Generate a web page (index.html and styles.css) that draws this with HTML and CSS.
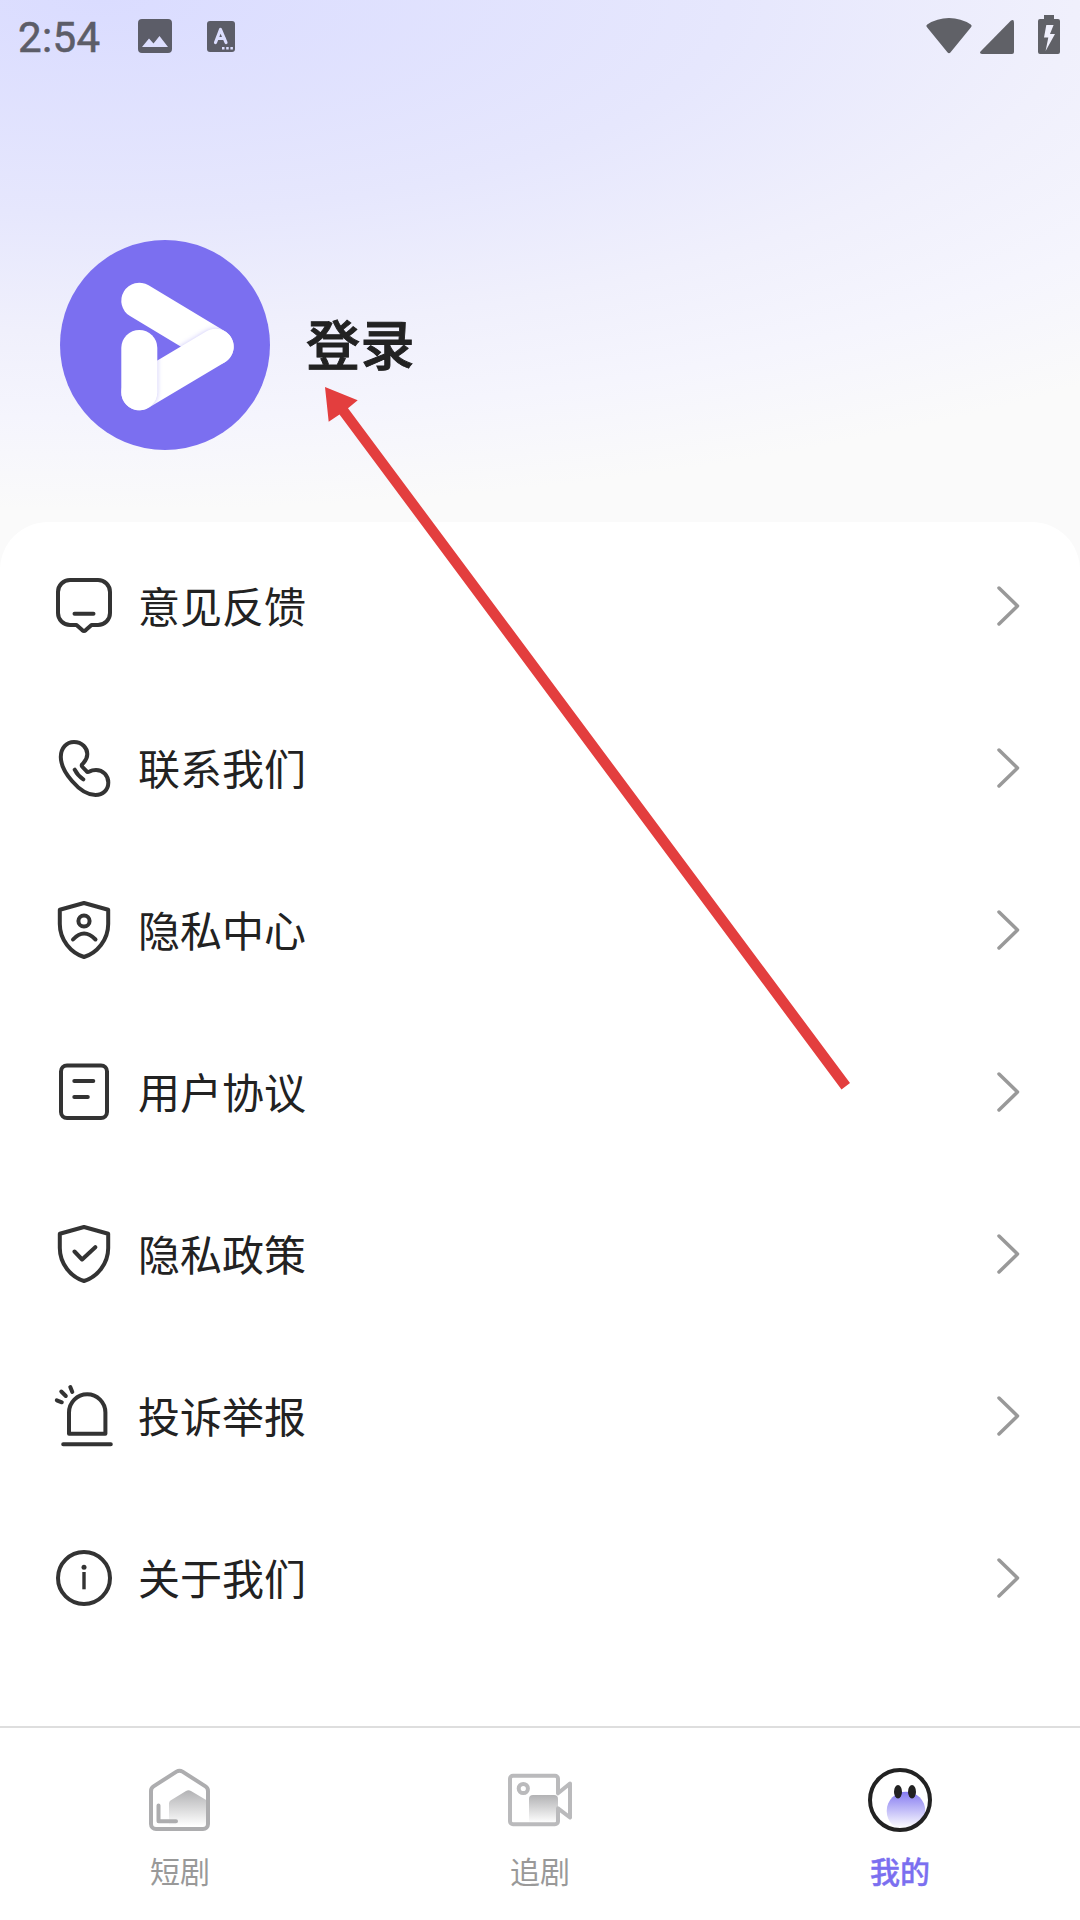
FILE: index.html
```
<!DOCTYPE html>
<html lang="zh-CN">
<head>
    <meta charset="UTF-8">
    <meta name="viewport" content="width=device-width, initial-scale=1.0">
    <title>我的</title>
    <link rel="stylesheet" href="styles.css">
</head>
<body>
    <div class="page">
        <header class="status-bar">
            <span class="time">2:54</span>
            <svg class="status-image" width="34" height="34" viewBox="0 0 34 34">
                <path fill-rule="evenodd" d="M4 0h26a4 4 0 0 1 4 4v26a4 4 0 0 1-4 4H4a4 4 0 0 1-4-4V4a4 4 0 0 1 4-4zM4 28h26l-8.500-11-6 7.500-4.500-5z"/>
            </svg>
            <svg class="status-input" width="28" height="31" viewBox="0 0 28 31">
                <rect width="28" height="31" rx="3"/>
                <path d="M8.500 21.500L13.500 8.500L19 21.500M10 17.500h7.500" fill="none" stroke="#dcdeff" stroke-width="3.200" stroke-linecap="round" stroke-linejoin="round"/>
                <path d="M15 26h2.500v2.500H15zM19.200 26h2.500v2.500h-2.500zM23.400 26h2.500v2.500h-2.500z" fill="#dcdeff"/>
            </svg>
            <div class="status-right">
                <svg width="46" height="37" viewBox="0 0 46 37">
                    <path d="M1.200 7.500Q11 1 23 1T44.800 7.500Q46.300 8.700 45 10.200L24.400 35.500Q23 37 21.600 35.500L1 10.200Q-.3 8.700 1.200 7.500z"/>
                </svg>
                <svg class="signal" width="34" height="34" viewBox="0 0 34 34">
                    <path d="M31 .6Q34-1 34 2.500V32a2 2 0 0 1-2 2H2Q-1 34 .5 31.400z"/>
                </svg>
                <svg class="battery" width="22" height="39" viewBox="0 0 22 39">
                    <path fill-rule="evenodd" d="M6 0h10v4h4a2 2 0 0 1 2 2v31a2 2 0 0 1-2 2H2a2 2 0 0 1-2-2V6a2 2 0 0 1 2-2h4zM8.300 10L6 22.500h4.300L7.600 36 17 19h-5l3.600-9z"/>
                </svg>
            </div>
        </header>

        <section class="profile">
            <svg class="avatar" width="210" height="210" viewBox="0 0 210 210">
                <defs>
                    <filter id="soft" filterUnits="userSpaceOnUse" x="0" y="0" width="210" height="210">
                        <feGaussianBlur stdDeviation="2.500"/>
                    </filter>
                    <mask id="topBar" maskUnits="userSpaceOnUse" x="0" y="0" width="210" height="210">
                        <path d="M79.300 60.700L155.700 106.700" stroke="#fff" stroke-width="36" stroke-linecap="round"/>
                    </mask>
                    <mask id="lowBar" maskUnits="userSpaceOnUse" x="0" y="0" width="210" height="210">
                        <path d="M155.700 106.700L79.300 152.300" stroke="#fff" stroke-width="36" stroke-linecap="round"/>
                    </mask>
                </defs>
                <circle cx="105" cy="105" r="105" fill="#7b6ff0"/>
                <g stroke-width="36" stroke-linecap="round">
                    <path d="M79.300 60.700L155.700 106.700" stroke="#fff"/>
                    <g mask="url(#topBar)">
                        <path d="M155.700 106.700L79.300 152.300" stroke="#7b6ff0" opacity=".4" filter="url(#soft)"/>
                    </g>
                    <path d="M155.700 106.700L79.300 152.300" stroke="#fff"/>
                    <g mask="url(#lowBar)">
                        <path d="M79.300 108V152.300" stroke="#7b6ff0" opacity=".4" filter="url(#soft)"/>
                    </g>
                    <path d="M79.300 108V152.300" stroke="#fff"/>
                </g>
            </svg>
            <h1>登录</h1>
        </section>

        <main class="menu">
            <a class="menu-item">
                <svg class="icon" viewBox="0 0 60 60">
                    <path d="M16 4h28a12 12 0 0 1 12 12v21a12 12 0 0 1-12 12h-6.500l-5.700 5.100q-1.800 1.500-3.600 0L22.500 49H16A12 12 0 0 1 4 37V16A12 12 0 0 1 16 4zM20.500 37.800h19"/>
                </svg>
                <span>意见反馈</span>
                <svg class="chevron" viewBox="0 0 24 42"><path d="M3 3l18.500 18L3 39"/></svg>
            </a>
            <a class="menu-item">
                <svg class="icon" viewBox="0 0 60 60">
                    <path d="M20 4C28 4 33.300 10 33.300 16C33.300 22 30 24 28 26.500Q27.300 27.700 28.500 29L32.500 33.200Q33.500 34.500 35.500 33.500C37.500 32.300 39 32 42 32C49 32 54.300 37.500 54.300 44.500C54.300 52 49 57 41.500 57C32 57 24 50 18 43C11 35 6.800 27 6.800 19C6.800 10 12.500 4 20 4zM20.700 31.700Q23.500 37.500 29.300 41.300"/>
                </svg>
                <span>联系我们</span>
                <svg class="chevron" viewBox="0 0 24 42"><path d="M3 3l18.500 18L3 39"/></svg>
            </a>
            <a class="menu-item">
                <svg class="icon" viewBox="0 0 60 60">
                    <path d="M30 3L54.200 9.700V24C54.200 40 43 53 30 57C17 53 5.800 40 5.800 24V9.700zM19 39.500Q30 27.500 41.500 39.500"/>
                    <circle cx="30" cy="21" r="5.600"/>
                </svg>
                <span>隐私中心</span>
                <svg class="chevron" viewBox="0 0 24 42"><path d="M3 3l18.500 18L3 39"/></svg>
            </a>
            <a class="menu-item">
                <svg class="icon" viewBox="0 0 60 60">
                    <rect x="7" y="3.500" width="46" height="52.500" rx="6"/>
                    <path d="M20.300 19h19M20.300 35h13.500"/>
                </svg>
                <span>用户协议</span>
                <svg class="chevron" viewBox="0 0 24 42"><path d="M3 3l18.500 18L3 39"/></svg>
            </a>
            <a class="menu-item">
                <svg class="icon" viewBox="0 0 60 60">
                    <path d="M30 3L54.200 9.700V24C54.200 40 43 53 30 57C17 53 5.800 40 5.800 24V9.700zM20.500 27.500l7.600 8L41.300 23.200"/>
                </svg>
                <span>隐私政策</span>
                <svg class="chevron" viewBox="0 0 24 42"><path d="M3 3l18.500 18L3 39"/></svg>
            </a>
            <a class="menu-item">
                <svg class="icon" viewBox="0 0 60 60">
                    <path d="M15 47.700V26.500a18.200 18.200 0 0 1 36.400 0v21.200zM9.200 58.200h47.600M16.300 1l2 5M7.300 5.500l4.500 4.500M2.800 14.300l5 2"/>
                </svg>
                <span>投诉举报</span>
                <svg class="chevron" viewBox="0 0 24 42"><path d="M3 3l18.500 18L3 39"/></svg>
            </a>
            <a class="menu-item">
                <svg class="icon" viewBox="0 0 60 60">
                    <circle cx="30" cy="30" r="26"/>
                    <path class="info-bar" d="M30 24v17.300"/>
                    <circle class="info-dot" cx="30" cy="19.300" r="2.500"/>
                </svg>
                <span>关于我们</span>
                <svg class="chevron" viewBox="0 0 24 42"><path d="M3 3l18.500 18L3 39"/></svg>
            </a>
        </main>

        <nav class="tab-bar">
            <a class="tab">
                <svg width="64" height="64" viewBox="0 0 64 64">
                    <defs>
                        <linearGradient id="grayFade" x1="0" y1="0" x2="0" y2="1">
                            <stop offset="0" stop-color="#b2b2b4"/>
                            <stop offset="1" stop-color="#fff"/>
                        </linearGradient>
                    </defs>
                    <path d="M21 35.500Q21 33.500 22.500 32.500L38 23Q40.500 21.500 43 23L59 32.500V58H21z" fill="url(#grayFade)"/>
                    <path d="M28.500 3.600Q31.500 1.800 34.500 3.600L57.500 18.400Q60 20 60 23V56a5 5 0 0 1-5 5H8a5 5 0 0 1-5-5V23Q3 20 5.500 18.400zM10.500 37.500V53.200H28" fill="none" stroke="#adadaf" stroke-width="4" stroke-linecap="round" stroke-linejoin="round"/>
                </svg>
                <span>短剧</span>
            </a>
            <a class="tab">
                <svg width="64" height="64" viewBox="0 0 64 64">
                    <path d="M21 55V31a4 4 0 0 1 4-4h21a4 4 0 0 1 4 4v24z" fill="url(#grayFade)"/>
                    <g fill="none" stroke="#bababc" stroke-width="4" stroke-linejoin="round">
                        <path d="M50 25.300V10.700a3 3 0 0 0-3-3H5a3 3 0 0 0-3 3v42.600a3 3 0 0 0 3 3h42a3 3 0 0 0 3-3V40.300L62 49.500V15.500z"/>
                        <circle cx="15.300" cy="20.500" r="4.600"/>
                    </g>
                </svg>
                <span>追剧</span>
            </a>
            <a class="tab active">
                <svg width="64" height="64" viewBox="0 0 64 64">
                    <defs>
                        <linearGradient id="purpleFade" x1="0" y1="0" x2="0" y2="1">
                            <stop offset="0" stop-color="#857bf1"/>
                            <stop offset=".95" stop-color="#fff"/>
                        </linearGradient>
                        <clipPath id="faceClip"><circle cx="32" cy="32" r="29"/></clipPath>
                    </defs>
                    <circle cx="38" cy="43" r="19.300" fill="url(#purpleFade)" clip-path="url(#faceClip)"/>
                    <circle cx="32" cy="32" r="30" fill="none" stroke="#222" stroke-width="4"/>
                    <ellipse cx="30" cy="23.700" rx="4" ry="6.700" fill="#222"/>
                    <ellipse cx="44" cy="23.700" rx="4" ry="6.700" fill="#222"/>
                </svg>
                <span>我的</span>
            </a>
        </nav>

        <!-- pointer to the login entry -->
        <svg class="arrow" width="540" height="720" viewBox="0 0 540 720">
            <path d="M5 7L37.700 20.300L28 28.300L530 703L521.500 709.500L19.500 34.500L8.700 41.700z"/>
        </svg>
    </div>
</body>
</html>
```
FILE: styles.css
```
* {
    margin: 0;
    padding: 0;
    box-sizing: border-box;
}

body {
    font-family: "Noto Sans CJK SC", sans-serif;
    background: #fafafa;
    color: #222222;
}

.page {
    position: relative;
    width: 1080px;
    height: 1920px;
    overflow: hidden;
    display: flex;
    flex-direction: column;
    background: radial-gradient(1500px 510px at 100px 0, #dadcff 0, #e6e7fd 42%, #f0f0fc 65%, #f5f5fd 82%, #fafafa 100%);
}

.status-bar {
    height: 72px;
    padding: 0 20px 0 18px;
    display: flex;
    align-items: center;
    fill: #5c5d68;
}

.time {
    width: 120px;
    font-family: Roboto, sans-serif;
    font-size: 42px;
    letter-spacing: 0.4px;
    color: #5c5d68;
    -webkit-text-stroke: 0.6px #5c5d68;
    padding-top: 3px;
}

.status-input {
    margin-left: 35px;
}

.status-right {
    margin-left: auto;
    height: 39px;
    margin-top: -3px;
    display: flex;
    align-items: flex-end;
    fill: #606167;
}

.signal {
    margin-left: 8px;
}

.battery {
    margin-left: 24px;
}

.profile {
    height: 450px;
    padding: 168px 60px 0;
    display: flex;
    align-items: flex-start;
    gap: 36px;
}

.profile h1 {
    font-size: 54px;
    font-weight: 500;
    letter-spacing: 0.5px;
    line-height: 206px;
    -webkit-text-stroke: 0.9px #222222;
}

.menu {
    flex: 1;
    padding-top: 3px;
    background: #ffffff;
    border-radius: 48px 48px 0 0;
}

.menu-item {
    height: 162px;
    padding: 0 60px 0 54px;
    display: flex;
    align-items: center;
    font-size: 42px;
}

.menu-item span {
    margin-left: 24px;
    padding-bottom: 3px;
    flex: 1;
}

.icon {
    width: 60px;
    height: 60px;
    overflow: visible;
    fill: none;
    stroke: #333333;
    stroke-width: 4;
    stroke-linecap: round;
    stroke-linejoin: round;
}

.icon .info-bar {
    stroke-width: 3.4;
    stroke-linecap: butt;
}

.icon .info-dot {
    fill: #333333;
    stroke: none;
}

.chevron {
    width: 24px;
    height: 42px;
    fill: none;
    stroke: #999999;
    stroke-width: 3.5;
    stroke-linecap: round;
    stroke-linejoin: round;
}

.tab-bar {
    height: 194px;
    display: flex;
    background: #ffffff;
    border-top: 2px solid #dedede;
}

.tab {
    flex: 1;
    padding-top: 40px;
    display: flex;
    flex-direction: column;
    align-items: center;
    font-size: 30px;
    color: #999999;
}

.tab span {
    margin-top: 16px;
    line-height: 44px;
}

.tab.active {
    color: #7b6ff0;
    font-weight: 500;
}

.tab.active span {
    -webkit-text-stroke: 0.4px #7b6ff0;
}

.arrow {
    position: absolute;
    left: 320px;
    top: 380px;
    fill: #e33e3e;
}
```
